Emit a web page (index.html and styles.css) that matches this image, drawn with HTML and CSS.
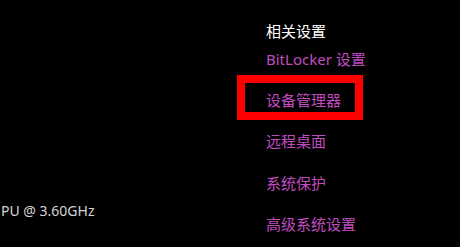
FILE: index.html
```html
<!DOCTYPE html>
<html lang="zh-CN">
<head>
<meta charset="utf-8">
<link rel="stylesheet" href="styles.css">
</head>
<body>
<div class="page">
  <div class="left">
    <div class="cpu">PU @ 3.60GHz</div>
  </div>
  <div class="related">
    <div class="title">相关设置</div>
    <a class="link first">BitLocker 设置</a>
    <a class="link">设备管理器</a>
    <a class="link">远程桌面</a>
    <a class="link">系统保护</a>
    <a class="link">高级系统设置</a>
  </div>
  <div class="highlight"></div>
</div>
</body>
</html>
```
FILE: styles.css
```css
html, body {
  margin: 0;
  padding: 0;
  background: #000;
}
.page {
  position: relative;
  width: 460px;
  height: 247px;
  overflow: hidden;
  display: flex;
  font-family: "Noto Sans", "Noto Sans CJK SC", sans-serif;
  font-size: 15px;
}
.left {
  width: 266px;
  flex: none;
  padding-top: 201px;
  box-sizing: border-box;
}
.cpu {
  color: #d4d4d4;
  font-size: 14px;
  line-height: 20px;
  padding-left: 1px;
}
.related {
  display: flex;
  flex-direction: column;
  padding-top: 20.5px;
}
.title {
  color: #ffffff;
  line-height: 20px;
}
.link {
  color: #c04cc0;
  line-height: 20px;
  margin-top: 21.2px;
  text-decoration: none;
}
.link.first {
  margin-top: 8.5px;
}
.highlight {
  position: absolute;
  left: 237px;
  top: 75px;
  width: 126px;
  height: 45px;
  box-sizing: border-box;
  border: 8px solid #ff0000;
}
```
